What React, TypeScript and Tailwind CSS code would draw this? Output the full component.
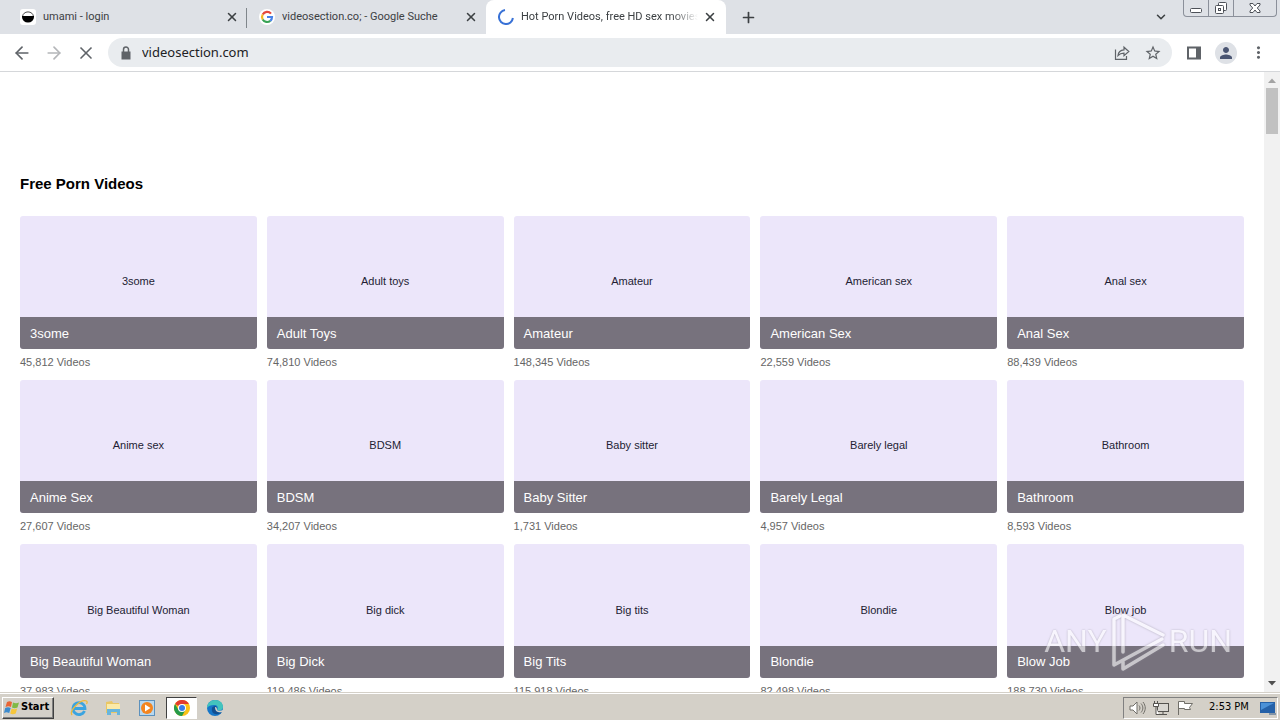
import React from 'react';
import { FiX, FiPlus, FiChevronDown, FiArrowLeft, FiArrowRight } from 'react-icons/fi';
import { MdStarOutline, MdPerson, MdMoreVert } from 'react-icons/md';

interface Category {
  alt: string;
  title: string;
  count: string;
}

const categories: Category[] = [
  { alt: '3some', title: '3some', count: '45,812' },
  { alt: 'Adult toys', title: 'Adult Toys', count: '74,810' },
  { alt: 'Amateur', title: 'Amateur', count: '148,345' },
  { alt: 'American sex', title: 'American Sex', count: '22,559' },
  { alt: 'Anal sex', title: 'Anal Sex', count: '88,439' },
  { alt: 'Anime sex', title: 'Anime Sex', count: '27,607' },
  { alt: 'BDSM', title: 'BDSM', count: '34,207' },
  { alt: 'Baby sitter', title: 'Baby Sitter', count: '1,731' },
  { alt: 'Barely legal', title: 'Barely Legal', count: '4,957' },
  { alt: 'Bathroom', title: 'Bathroom', count: '8,593' },
  { alt: 'Big Beautiful Woman', title: 'Big Beautiful Woman', count: '37,983' },
  { alt: 'Big dick', title: 'Big Dick', count: '119,486' },
  { alt: 'Big tits', title: 'Big Tits', count: '115,918' },
  { alt: 'Blondie', title: 'Blondie', count: '82,498' },
  { alt: 'Blow job', title: 'Blow Job', count: '188,730' },
];

const UmamiIcon = () => (
  <svg viewBox="0 0 16 16" className="h-4 w-4 shrink-0">
    <rect width="16" height="16" rx="3" fill="#fff" />
    <path d="M2.6 7.5a5.4 4.6 0 0 1 10.8 0" fill="none" stroke="#222" strokeWidth="0.8" />
    <path d="M2 7h12v1a6 5.6 0 0 1-12 0z" fill="#000" />
  </svg>
);

const GoogleIcon = () => (
  <svg viewBox="0 0 16 16" className="h-4 w-4 shrink-0" fill="none" strokeWidth="2.2">
    <circle cx="8" cy="8" r="8" fill="#fff" />
    <path d="M12 4.6A5 5 0 0 0 3.7 5.5" stroke="#e5483c" />
    <path d="M3.7 5.5a5 5 0 0 0 0 5" stroke="#f3b81f" />
    <path d="M3.7 10.5a5 5 0 0 0 7.6 1.3" stroke="#38a355" />
    <path d="M11.3 11.8A5 5 0 0 0 13 8H8" stroke="#4681e8" />
  </svg>
);

const Spinner = () => (
  <svg viewBox="0 0 16 16" className="h-4 w-4 shrink-0">
    <path d="M7 1.1A7 7 0 1 0 14.9 9" fill="none" stroke="#3871d6" strokeWidth="2" />
  </svg>
);

interface TabProps {
  icon: React.ReactNode;
  title: string;
  active?: boolean;
  divider?: boolean;
}

const Tab: React.FC<TabProps> = ({ icon, title, active, divider }) => (
  <div
    className={
      active
        ? 'flex h-full w-60 items-center rounded-t-lg bg-white pl-3 pr-2'
        : 'relative flex h-full w-[239px] items-center pl-3 pr-[7px]'
    }
  >
    {icon}
    <button
      className={
        active
          ? 'ml-[7px] flex-1 overflow-hidden whitespace-nowrap text-left [mask-image:linear-gradient(to_right,#000_85%,transparent)]'
          : 'ml-[7px] flex-1 overflow-hidden whitespace-nowrap text-left'
      }
    >
      {title}
    </button>
    <button aria-label="Close tab" className="ml-1 flex h-4 w-4 items-center justify-center text-[#3c4043]">
      <FiX size={14} strokeWidth={2.6} />
    </button>
    {divider && <span className="absolute right-0 top-2 h-5 w-px bg-[#80868b]" />}
  </div>
);

const WindowControls = () => (
  <div className="flex h-[17px] w-[94px] self-start rounded-b border border-t-0 border-[#8b909a] text-[#4d5158]">
    <button aria-label="Minimize" className="flex w-[25px] items-center justify-center border-r border-[#8b909a]">
      <svg viewBox="0 0 14 14" className="h-3.5 w-3.5">
        <rect x="1.5" y="7.5" width="11" height="4" rx="1" fill="#fff" stroke="currentColor" />
      </svg>
    </button>
    <button aria-label="Restore" className="flex w-[25px] items-center justify-center border-r border-[#8b909a]">
      <svg viewBox="0 0 14 14" className="h-3.5 w-3.5" fill="#fff" stroke="currentColor">
        <rect x="4.5" y="1.5" width="8" height="8" rx="1" />
        <rect x="1.5" y="4.5" width="8" height="8" rx="1" />
        <rect x="4.5" y="7.5" width="2" height="2" />
      </svg>
    </button>
    <button aria-label="Close window" className="flex flex-1 items-center justify-center">
      <svg viewBox="0 0 14 14" className="h-3.5 w-3.5">
        <path
          d="M2 2.5h3L7 5l2-2.5h3V4L9.3 7l2.7 3v1.5H9L7 9l-2 2.5H2V10l2.7-3L2 4z"
          fill="#fff"
          stroke="currentColor"
        />
      </svg>
    </button>
  </div>
);

const TabStrip = () => (
  <div className="flex h-[34px] shrink-0 items-center bg-[#dee1e6] pl-2 pr-[3px] font-[Roboto,sans-serif] text-[11px] text-[#3c4043]">
    <Tab icon={<UmamiIcon />} title="umami - login" divider />
    <Tab icon={<GoogleIcon />} title="videosection.co; - Google Suche" />
    <Tab icon={<Spinner />} title="Hot Porn Videos, free HD sex movies" active />
    <button aria-label="New tab" className="ml-3 flex h-5 w-5 items-center justify-center">
      <FiPlus size={17} strokeWidth={2.4} />
    </button>
    <button aria-label="Search tabs" className="ml-auto mr-[15px]">
      <FiChevronDown size={14} strokeWidth={2.6} />
    </button>
    <WindowControls />
  </div>
);

const Toolbar = () => (
  <div className="flex h-[38px] shrink-0 items-center border-b border-[#d5d7da] bg-white px-3 text-[#5f6368]">
    <button aria-label="Back" className="w-5">
      <FiArrowLeft size={20} />
    </button>
    <button aria-label="Forward" className="ml-3 w-5 text-[#b4b6b9]">
      <FiArrowRight size={20} />
    </button>
    <button aria-label="Stop" className="ml-3 w-5">
      <FiX size={20} />
    </button>
    <div className="ml-3 flex h-[29px] flex-1 items-center rounded-full bg-[#e9ecef] px-2.5">
      <svg viewBox="0 0 16 16" className="h-4 w-4 shrink-0">
        <path d="M3.5 6.5h9v8h-9z" fill="currentColor" />
        <path d="M5.5 7V4.5a2.5 2.5 0 0 1 5 0V7" fill="none" stroke="currentColor" strokeWidth="1.5" />
      </svg>
      <input
        aria-label="Address"
        defaultValue="videosection.com"
        className="ml-2 min-w-0 flex-1 bg-transparent font-['Noto_Sans',sans-serif] text-[13px] text-[#202124] outline-none"
      />
      <button aria-label="Share">
        <svg viewBox="0 0 16 16" className="h-4 w-4" fill="none" stroke="currentColor" strokeWidth="1.2">
          <path d="M1.5 4.5v9.9h11V11" />
          <path d="M4 10.5c.4-3.6 2.6-5.4 6-5.6V2.2l4.8 4.3L10 10.7V8.1c-2.6 0-4.5.7-6 2.4z" />
        </svg>
      </button>
      <button aria-label="Bookmark" className="ml-3.5">
        <MdStarOutline size={18} />
      </button>
    </div>
    <button aria-label="Side panel" className="ml-3.5 w-4">
      <svg viewBox="0 0 16 16" className="h-4 w-4">
        <path d="M1 1.5h14v13H1zM3 3.5v9h7v-9z" fill="currentColor" fillRule="evenodd" />
      </svg>
    </button>
    <button
      aria-label="Profile"
      className="ml-[13px] flex h-[22px] w-[22px] items-center justify-center rounded-full bg-[#dee1e6] text-[#4a5572]"
    >
      <MdPerson size={18} />
    </button>
    <button aria-label="Menu" className="ml-3 w-[19px]">
      <MdMoreVert size={19} />
    </button>
  </div>
);

const CategoryCard: React.FC<Category> = ({ alt, title, count }) => (
  <a href="#" className="block">
    <div className="flex aspect-video flex-col overflow-hidden rounded-[3px] bg-[#ece6fa]">
      <div className="flex flex-1 items-end justify-center pb-7 text-[11px] leading-4 text-[#231d33]">{alt}</div>
      <div className="flex h-8 shrink-0 items-center bg-[#77727d] px-2.5 pt-px text-[13px] text-white">{title}</div>
    </div>
    <div className="pt-[5px] text-[11px] leading-4 text-[#666]">{count} Videos</div>
  </a>
);

const Scrollbar = () => (
  <div className="flex w-4 shrink-0 flex-col items-center bg-[#f1f1f1]">
    <svg viewBox="0 0 16 16" className="h-4 w-4 shrink-0">
      <path d="M4 11l4-4.5L12 11z" fill="#a3a3a3" />
    </svg>
    <div className="h-[46px] w-3 bg-[#c1c1c1]" />
    <svg viewBox="0 0 16 16" className="mt-auto h-4 w-4 shrink-0">
      <path d="M4 5l4 4.5L12 5z" fill="#505050" />
    </svg>
  </div>
);

const Watermark = () => (
  <div className="pointer-events-none absolute bottom-12 right-12 flex items-center gap-px font-[Roboto,sans-serif] text-[32px] leading-none text-white opacity-60 [text-shadow:0_0_2px_#8b8794]">
    <span>ANY</span>
    <svg
      viewBox="0 0 60 62"
      className="h-[62px] w-[60px] drop-shadow-[0_0_1px_#8b8794]"
      fill="none"
      stroke="#fff"
      strokeWidth="3.5"
      strokeLinejoin="round"
      strokeLinecap="round"
    >
      <path d="M12 6L6 9v46L54 29" />
      <path d="M15 42V5l40 20" />
      <path d="M15 52v7l40-24" />
    </svg>
    <span>RUN</span>
  </div>
);

const IeIcon = () => (
  <svg viewBox="0 0 18 18" className="h-[18px] w-[18px]" fill="none">
    <path d="M14.5 12A6 6 0 1 1 15 9.500H4" stroke="#3ba4e0" strokeWidth="2.8" />
    <path d="M2 16C-1 12 10 0 16.5 2c1 .5.7 2 0 3" stroke="#edb93a" strokeWidth="1.3" />
  </svg>
);

const FolderIcon = () => (
  <svg viewBox="0 0 18 18" className="h-[18px] w-[18px]">
    <path d="M2 3l6-1 1 2h6v10H2z" fill="#e9c765" />
    <path d="M3 5h13v6H3z" fill="#faeaa8" />
    <path d="M3 10h13v6h-3v-3H7v3H3z" fill="#68b5dd" />
  </svg>
);

const MediaIcon = () => (
  <svg viewBox="0 0 18 18" className="h-[18px] w-[18px]">
    <rect x="1.5" y="1.5" width="15" height="15" fill="#b8d8ef" stroke="#5c91bd" />
    <circle cx="9" cy="9" r="6" fill="#f4851f" />
    <path d="M7 5.5l5.5 3.5L7 12.5z" fill="#fff" />
  </svg>
);

const ChromeIcon = () => (
  <svg viewBox="0 0 16 16" className="h-4 w-4">
    <circle cx="8" cy="8" r="8" fill="#fbc116" />
    <path d="M8 8L1.07 4A8 8 0 0 1 14.93 4H8z" fill="#e33b2e" />
    <path d="M1.07 4A8 8 0 0 0 8 16l3.46-6L8 8 4.5 10z" fill="#269b4a" />
    <circle cx="8" cy="8" r="4" fill="#fff" />
    <circle cx="8" cy="8" r="3" fill="#397de8" />
  </svg>
);

const EdgeIcon = () => (
  <svg viewBox="0 0 18 18" className="h-[18px] w-[18px]">
    <circle cx="9" cy="9" r="8" fill="#1676c8" />
    <path d="M1 9C1 4 5 1 9 1c5 0 8 3 8 7 0 3-3 4-6 3 2-3 0-5-3-5-3 0-6 1-7 3z" fill="#43c4bd" />
    <path d="M6 9c-1 4 2 7 6 6 2 0 3-1 4-2-3 1-6 0-6-3 1-1 1-3-1-3-1 0-3 1-3 2z" fill="#124f91" />
    <path d="M9 8c2 0 2 2 2 3 1 1 4 1 6 0v2c-4 1-8 0-8-5z" fill="#d4d0c8" />
  </svg>
);

const WindowsFlag = () => (
  <svg viewBox="0 0 18 16" className="h-4 w-[18px] shrink-0">
    <path d="M4 2c2-1 3-1 5 0L8 7C6 6 5 6 2.5 7z" fill="#e96535" />
    <path d="M10 2.5c2 1 4 1 6 0l-1.5 5c-2 1-4 1-5.5 0z" fill="#80b945" />
    <path d="M2.2 8c2-1 3.5-1 5.5 0l-1.5 5C4 12 3 12 1 13z" fill="#3d8bce" />
    <path d="M8.7 8.5c2 1 3.5 1 5.5 0l-1.5 5c-2 1-4 1-5.5 0z" fill="#f6c63b" />
  </svg>
);

const TrayIcons = () => (
  <>
    <svg viewBox="0 0 18 16" className="h-4 w-[18px]" fill="none" stroke="#716f69">
      <path d="M2 6h3l4-4v12l-4-4H2z" fill="#fff" />
      <path d="M11 5.5c1.3 1.5 1.3 3.5 0 5M13 3.5c2.5 3 2.5 6 0 9M15 2c3 4 3 8 0 12" />
    </svg>
    <svg viewBox="0 0 18 16" className="ml-1.5 h-4 w-[18px]" fill="#fff" stroke="#55534f">
      <rect x="5.5" y="3.5" width="11" height="8" fill="#d9d7d2" />
      <path d="M7 14.5h8M11 12v2" />
      <path d="M2.5 1v2M5.5 1v2M1.5 3.5h5v3h-5zM4 7v7.5h3" />
    </svg>
    <svg viewBox="0 0 18 16" className="ml-1.5 h-4 w-[18px]" fill="#fff" stroke="#716f69">
      <path d="M2.5 15V1.5h6v2h8l-3 4 1 2h-6v-1h-6" />
    </svg>
  </>
);

const Taskbar = () => (
  <div className="flex h-7 shrink-0 items-center border-t border-[#d4d0c8] bg-[#d4d0c8] px-0.5 pt-0.5 font-['DejaVu_Sans_Condensed','DejaVu_Sans',sans-serif] text-[11px] text-black shadow-[inset_0_1px_0_#fff]">
    <button className="flex h-[22px] w-[52px] items-center border border-b-[#404040] border-l-white border-r-[#404040] border-t-white font-bold shadow-[inset_-1px_-1px_0_#808080]">
      <WindowsFlag />
      Start
    </button>
    <div className="ml-[13px] flex items-center">
      <button aria-label="Internet Explorer" className="flex w-6 justify-center">
        <IeIcon />
      </button>
      <button aria-label="Explorer" className="ml-2.5 flex w-6 justify-center">
        <FolderIcon />
      </button>
      <button aria-label="Media Player" className="ml-2.5 flex w-6 justify-center">
        <MediaIcon />
      </button>
      <button
        aria-label="Chrome"
        className="ml-[7px] flex h-[22px] w-[31px] items-center justify-center border border-b-white border-l-[#404040] border-r-white border-t-[#404040] bg-white"
      >
        <ChromeIcon />
      </button>
      <button aria-label="Edge" className="ml-1.5 flex w-6 justify-center">
        <EdgeIcon />
      </button>
    </div>
    <div className="ml-auto flex h-[22px] items-center border border-b-white border-l-[#808080] border-r-white border-t-[#808080] pl-1">
      <TrayIcons />
      <span className="ml-[15px] w-[42px] whitespace-nowrap">2:53 PM</span>
      <svg viewBox="0 0 18 16" className="ml-2 h-4 w-[18px]">
        <path d="M1 2h15v11H1z" fill="#2561a8" />
        <path d="M2 3h13L2 10z" fill="#4b91d7" />
        <path d="M10 14h7" stroke="#315985" />
      </svg>
    </div>
  </div>
);

export default function App() {
  return (
    <div className="relative flex h-screen flex-col overflow-hidden bg-white font-['Liberation_Sans',Arial,sans-serif]">
      <TabStrip />
      <Toolbar />
      <div className="flex min-h-0 flex-1">
        <main className="min-w-0 flex-1 overflow-hidden px-5 pt-[102px]">
          <h1 className="text-[15px] font-bold leading-5 text-black">Free Porn Videos</h1>
          <div className="mt-[22px] grid grid-cols-5 gap-2.5">
            {categories.map((category) => (
              <CategoryCard key={category.title} {...category} />
            ))}
          </div>
        </main>
        <Scrollbar />
      </div>
      <Taskbar />
      <Watermark />
    </div>
  );
}
